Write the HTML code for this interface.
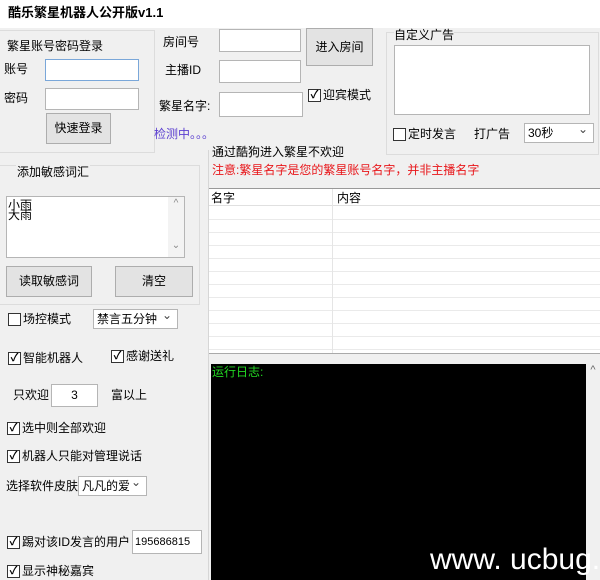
<!DOCTYPE html><html><head><meta charset="utf-8"><style>
*{margin:0;padding:0;box-sizing:border-box}
body{width:600px;height:580px;background:#f0f0f0;font-family:"Liberation Sans","Noto Sans CJK SC",sans-serif;font-size:12px;color:#000;position:relative;overflow:hidden}
.a{position:absolute;white-space:nowrap;line-height:14px}
.f{display:flex;align-items:center}
.in{position:absolute;background:#fff;border:1px solid #b5b5b5}
.bt{position:absolute;background:#e3e3e3;border:1px solid #adadad;text-align:center;font-size:12px}
.gb{position:absolute;border:1px solid #dcdcdc}
.cb{display:inline-block;flex:none;width:13px;height:13px;border:1px solid #333;background:#fff;margin-right:2px;font-size:11px;line-height:11px;text-align:center;font-weight:bold}
.sel{position:absolute;background:#fff;border:1px solid #b5b5b5;padding-left:3px;line-height:18px}
.sel:after{content:"⌄";position:absolute;right:5px;top:-4px;font-size:12px;color:#444}
</style></head><body>
<div style="position:absolute;left:0;top:0;width:600px;height:28px;background:#fff"></div>
<div class="a" style="left:8px;top:6px;font-weight:bold;font-size:13px">酷乐繁星机器人公开版v1.1</div>

<div class="gb" style="left:-1px;top:30px;width:156px;height:123px"></div>
<div class="a" style="left:7px;top:39px">繁星账号密码登录</div>
<div class="a" style="left:4px;top:62px">账号</div>
<div class="in" style="left:45px;top:59px;width:94px;height:22px;border-color:#7aa7d9"></div>
<div class="a" style="left:4px;top:91px">密码</div>
<div class="in" style="left:45px;top:88px;width:94px;height:22px"></div>
<div class="bt" style="left:46px;top:113px;width:65px;height:31px;line-height:29px">快速登录</div>

<div class="a" style="left:163px;top:35px">房间号</div>
<div class="in" style="left:219px;top:29px;width:82px;height:23px"></div>
<div class="a" style="left:165px;top:63px">主播ID</div>
<div class="in" style="left:219px;top:60px;width:82px;height:23px"></div>
<div class="a" style="left:159px;top:99px">繁星名字:</div>
<div class="in" style="left:219px;top:92px;width:84px;height:25px"></div>
<div class="bt" style="left:306px;top:28px;width:67px;height:38px;line-height:36px">进入房间</div>
<div class="a f" style="left:308px;top:88px"><span class="cb">✓</span>迎宾模式</div>
<div class="a" style="left:154px;top:127px;color:#5b3fd0">检测中。。。</div>

<div class="gb" style="left:386px;top:32px;width:213px;height:123px"></div>
<div class="a" style="left:394px;top:28px;background:#f0f0f0">自定义广告</div>
<div class="in" style="left:394px;top:45px;width:196px;height:70px"></div>
<div class="a f" style="left:393px;top:127px"><span class="cb"></span>定时发言</div>
<div class="a" style="left:474px;top:127px">打广告</div>
<div class="sel" style="left:524px;top:123px;width:70px;height:20px">30秒</div>

<div class="a" style="left:212px;top:145px">通过酷狗进入繁星不欢迎</div>
<div class="a" style="left:212px;top:163px;color:#e8161a">注意:繁星名字是您的繁星账号名字，并非主播名字</div>

<div style="position:absolute;left:209px;top:188px;width:391px;height:165px;background:#fff;border-top:1px solid #999;background-image:repeating-linear-gradient(#fff 0 12px,#eaeaea 12px 13px);background-position:0 18px"></div>
<div style="position:absolute;left:209px;top:189px;width:391px;height:17px;background:#fff;border-bottom:1px solid #e0e0e0"></div>
<div style="position:absolute;left:332px;top:189px;width:1px;height:164px;background:#e5e5e5"></div>
<div class="a" style="left:211px;top:191px">名字</div>
<div class="a" style="left:337px;top:191px">内容</div>
<div style="position:absolute;left:209px;top:353px;width:391px;height:1px;background:#aaa"></div>
<div style="position:absolute;left:208px;top:150px;width:1px;height:430px;background:#d6d6d6"></div>

<div class="gb" style="left:-1px;top:165px;width:201px;height:140px"></div>
<div class="a" style="left:16px;top:165px;background:#f0f0f0;padding:0 1px">添加敏感词汇</div>
<div class="in" style="left:6px;top:196px;width:179px;height:62px;line-height:10px;padding:3px 0 0 1px">小雨<br>大雨<div style="position:absolute;right:0;top:0;width:16px;height:60px;background:#f3f3f3;color:#888;font-size:10px;text-align:center;line-height:14px">^<br><br><br>⌄</div></div>
<div class="bt" style="left:6px;top:266px;width:86px;height:31px;line-height:29px">读取敏感词</div>
<div class="bt" style="left:115px;top:266px;width:78px;height:31px;line-height:29px">清空</div>

<div class="a f" style="left:8px;top:312px"><span class="cb"></span>场控模式</div>
<div class="sel" style="left:93px;top:309px;width:85px;height:20px">禁言五分钟</div>
<div class="a f" style="left:8px;top:351px"><span class="cb">✓</span>智能机器人</div>
<div class="a f" style="left:111px;top:349px"><span class="cb">✓</span>感谢送礼</div>
<div class="a" style="left:13px;top:388px">只欢迎</div>
<div class="in" style="left:51px;top:384px;width:47px;height:23px;text-align:center;line-height:21px">3</div>
<div class="a" style="left:111px;top:388px">富以上</div>
<div class="a f" style="left:7px;top:421px"><span class="cb">✓</span>选中则全部欢迎</div>
<div class="a f" style="left:7px;top:449px"><span class="cb">✓</span>机器人只能对管理说话</div>
<div class="a" style="left:6px;top:479px">选择软件皮肤</div>
<div class="sel" style="left:78px;top:476px;width:69px;height:20px">凡凡的爱</div>
<div class="a f" style="left:7px;top:535px"><span class="cb">✓</span>踢对该ID发言的用户</div>
<div class="in" style="left:132px;top:530px;width:70px;height:24px;line-height:22px;padding-left:2px;font-size:11px">195686815</div>
<div class="a f" style="left:7px;top:564px"><span class="cb">✓</span>显示神秘嘉宾</div>

<div style="position:absolute;left:211px;top:364px;width:375px;height:216px;background:#000"></div>
<div style="position:absolute;left:586px;top:364px;width:14px;height:216px;background:#f0f0f0;color:#666;font-size:11px;text-align:center">^</div>
<div class="a" style="left:212px;top:365px;color:#22d622">运行日志:</div>
<div style="position:absolute;left:420px;top:540px;width:180px;height:40px;overflow:hidden"><div class="a" style="left:10px;top:4px;color:#fff;font-size:30px;line-height:32px;font-family:'Liberation Sans',sans-serif">www. ucbug. c</div></div>
</body></html>
